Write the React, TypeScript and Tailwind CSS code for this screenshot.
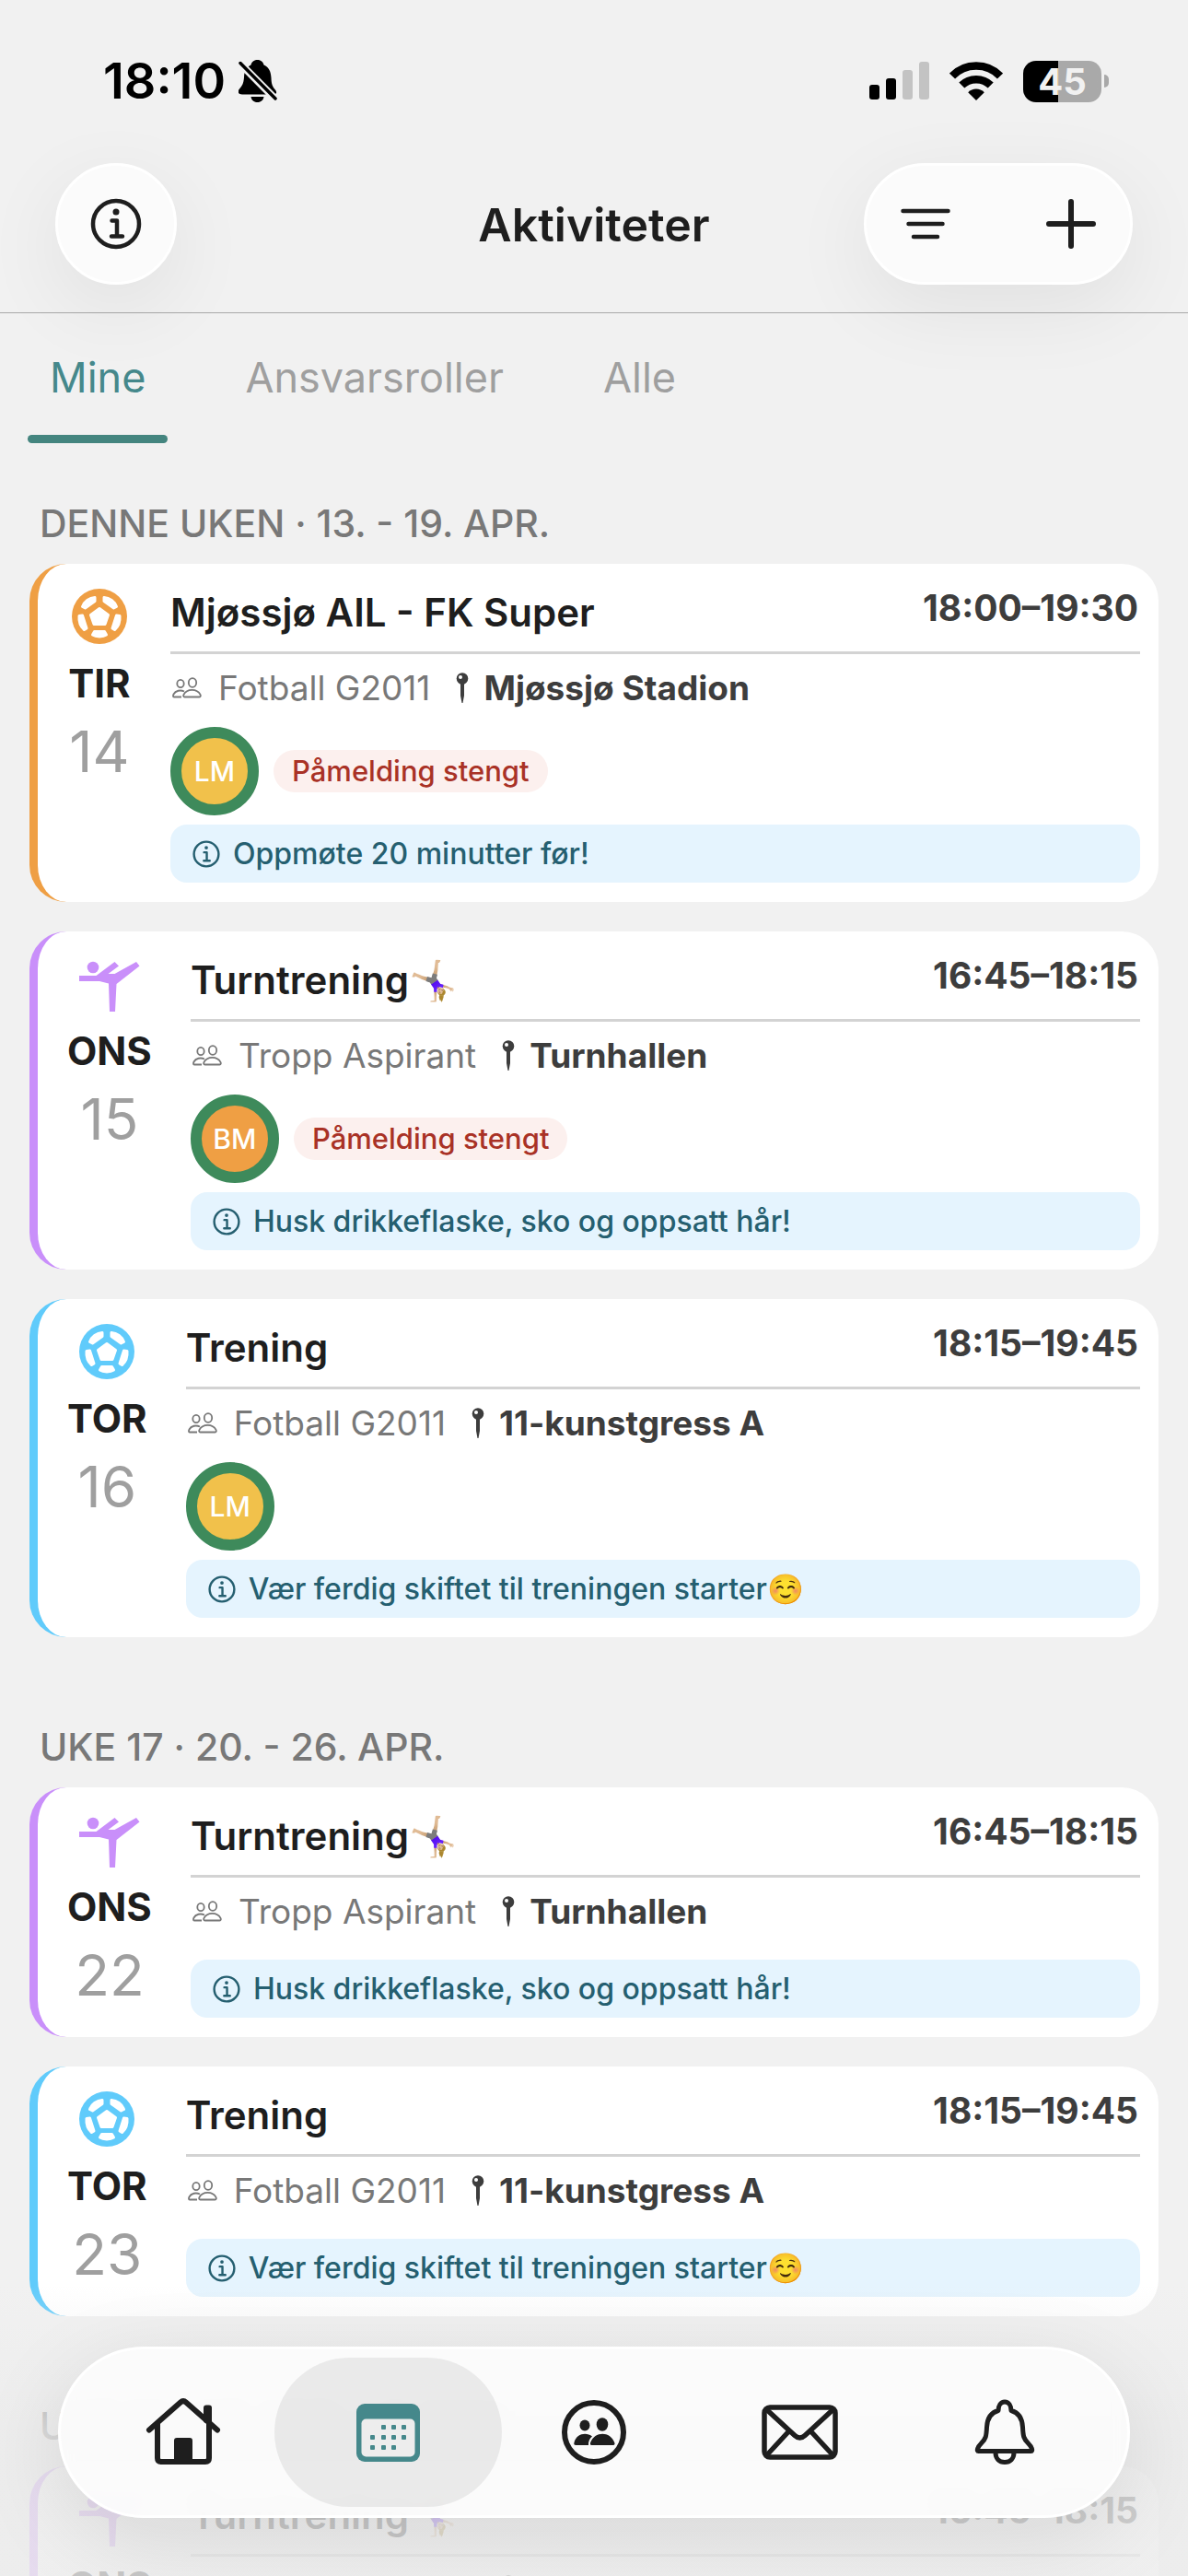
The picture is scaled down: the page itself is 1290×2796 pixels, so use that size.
import type { ReactNode } from 'react';

type Sport = 'football' | 'gymnastics';

interface Participant {
  initials: string;
  className: string;
}

interface Activity {
  id: number;
  sport: Sport;
  accent: string;
  iconColor: string;
  day: string;
  date: string;
  title: string;
  time: string;
  team: string;
  place: string;
  participant?: Participant;
  closed?: boolean;
  info: string;
}

interface Week {
  label: string;
  activities: Activity[];
}

const ORANGE = { accent: 'border-[#ef9f44]', iconColor: 'text-[#ef9f44]' };
const PURPLE = { accent: 'border-[#c98ffa]', iconColor: 'text-[#c98ffa]' };
const BLUE = { accent: 'border-[#60cbfb]', iconColor: 'text-[#60cbfb]' };

const lm: Participant = { initials: 'LM', className: 'bg-[#f1c14b]' };
const bm: Participant = { initials: 'BM', className: 'bg-[#ef9f44]' };

const gym = {
  ...PURPLE,
  sport: 'gymnastics' as Sport,
  day: 'ONS',
  title: 'Turntrening🤸🏼‍♀️',
  time: '16:45–18:15',
  team: 'Tropp Aspirant',
  place: 'Turnhallen',
  info: 'Husk drikkeflaske, sko og oppsatt hår!',
};

const football = {
  ...BLUE,
  sport: 'football' as Sport,
  day: 'TOR',
  title: 'Trening',
  time: '18:15–19:45',
  team: 'Fotball G2011',
  place: '11-kunstgress A',
  info: 'Vær ferdig skiftet til treningen starter☺️',
};

const weeks: Week[] = [
  {
    label: 'DENNE UKEN · 13. - 19. APR.',
    activities: [
      {
        ...ORANGE,
        id: 1,
        sport: 'football',
        day: 'TIR',
        date: '14',
        title: 'Mjøssjø AIL - FK Super',
        time: '18:00–19:30',
        team: 'Fotball G2011',
        place: 'Mjøssjø Stadion',
        participant: lm,
        closed: true,
        info: 'Oppmøte 20 minutter før!',
      },
      { ...gym, id: 2, date: '15', participant: bm, closed: true },
      { ...football, id: 3, date: '16', participant: lm },
    ],
  },
  {
    label: 'UKE 17 · 20. - 26. APR.',
    activities: [
      { ...gym, id: 4, date: '22' },
      { ...football, id: 5, date: '23' },
    ],
  },
  {
    label: 'UKE 18 · 27. APR. - 3. MAI.',
    activities: [{ ...gym, id: 6, date: '29' }],
  },
];

/* Icons */

function InfoIcon({ className, stroke }: { className: string; stroke: number }) {
  return (
    <svg viewBox="0 0 56 56" className={className} fill="none" stroke="currentColor" strokeWidth={stroke} strokeLinecap="round" strokeLinejoin="round">
      <circle cx="28" cy="28" r="25" />
      <path d="M23.500 24.500H29V41.500M23 41.500h12" />
      <circle cx="28" cy="15" r="3.500" fill="currentColor" stroke="none" />
    </svg>
  );
}

function BellOffIcon() {
  return (
    <svg viewBox="0 0 42 46" className="h-[46px] w-[42px]">
      <path
        d="M20.500 0c4 0 6.500 2.500 7 5.500 5.500 2.500 7.800 7.500 8 14 .2 7 1.500 9.500 4 12.500 3 3.500 1.500 5.500-1.500 5.500H4c-4.500 0-5.500-3-3-6 3-3.500 4.500-6 5-12.500.2-7 2.500-11 7.500-13.500.5-3 3-5.500 7-5.500zM13.500 40h14c-.5 3.500-3 6-7 6s-6.500-2.500-7-6z"
        fill="#000"
      />
      <path d="M2.500 4.500 40 42.500" stroke="#f1f1f1" strokeWidth="8" />
      <path d="M2 3.500 40 42" stroke="#000" strokeWidth="3.500" strokeLinecap="round" />
    </svg>
  );
}

function SignalIcon() {
  return (
    <svg viewBox="0 0 65 42" className="h-[42px] w-[65px]">
      <rect x="0" y="25" width="11" height="16" rx="3" />
      <rect x="18" y="18" width="11" height="23" rx="3" />
      <rect x="36" y="9" width="11" height="32" rx="3" fill="#c3c3c3" />
      <rect x="54" y="0" width="11" height="41" rx="3" fill="#c3c3c3" />
    </svg>
  );
}

function WifiIcon() {
  return (
    <svg viewBox="0 0 58 42" className="h-[42px] w-[58px]" fill="none" stroke="#000" strokeWidth="8.500">
      <path d="M3 15.500C17 .8 41 .8 55 15.500" />
      <path d="M13.300 25.500c8.500-8.500 22.900-8.500 31.400 0" />
      <path d="M29 42 20.200 33.200c4.800-5 12.800-5 17.600 0z" fill="#000" stroke="none" />
    </svg>
  );
}

function BallIcon({ className }: { className: string }) {
  return (
    <svg viewBox="0 0 60 60" className={className}>
      <circle cx="30" cy="30" r="30" fill="currentColor" />
      <g fill="#fff" stroke="#fff" strokeWidth="3" strokeLinejoin="round">
        <path d="M30 21.500 39.500 28.500 36 38.500H24L20.500 28.500z" />
        <path d="M25 9.500V13.500L14.500 21 11.500 19.500C13.500 14 19 9.800 25 9.500z" />
        <path d="M35 9.500V13.500L45.500 21 48.500 19.500C46.500 14 41 9.800 35 9.500z" />
        <path d="M8 29.500 11.500 29 16 43 13.500 44.500C9.500 41 7.500 35.500 8 29.500z" />
        <path d="M52 29.500 48.500 29 44 43 46.500 44.500C50.500 41 52.500 35.500 52 29.500z" />
        <path d="M24.500 46.500h11l2 3.500C34 52.500 26 52.500 22.500 50z" />
      </g>
    </svg>
  );
}

function GymnastIcon({ className }: { className: string }) {
  return (
    <svg viewBox="0 0 66 60" className={className} fill="currentColor">
      <circle cx="15" cy="12" r="6.300" />
      <path d="M0 21H18.500L38.500 6l4.500 4.500L31.500 19h7L62 6l3.500 4.500L40.500 30 39 60h-6L32 29.500 22 27H0z" />
    </svg>
  );
}

function PeopleIcon() {
  return (
    <svg viewBox="0 0 32 24" className="h-6 w-8 shrink-0" fill="none" stroke="#787878" strokeWidth="1.800" strokeLinejoin="round">
      <ellipse cx="9" cy="7" rx="3.700" ry="4.200" />
      <ellipse cx="22" cy="6" rx="4.200" ry="4.900" />
      <path d="M10 21.500H2c-1.500 0-1-2-.5-3 2-4 7.500-5 11.500-3" />
      <path d="M13.500 21.500c-1.500 0-1.600-1.500-1-2.700 3.500-6.700 14.500-6.700 18 0 .6 1.200.5 2.700-1 2.700z" />
    </svg>
  );
}

function PinIcon() {
  return (
    <svg viewBox="0 0 14 34" className="h-[34px] w-[14px] shrink-0">
      <path d="M5 11h4v14L7.500 33h-1L5 25z" fill="#3d3d3d" />
      <circle cx="7" cy="6.500" r="6.300" fill="#3d3d3d" />
      <circle cx="5" cy="5" r="2" fill="#fff" />
    </svg>
  );
}

function HomeIcon() {
  return (
    <svg viewBox="0 0 82 74" className="h-[74px] w-[82px]" fill="none" stroke="#1e1e1e" strokeWidth="6" strokeLinecap="round" strokeLinejoin="round">
      <path d="M4 34.500 38 4.500q3-2.600 6 0L78 34.500" />
      <path d="M13 28V65q0 4 4 4H65q4 0 4-4V10.500h-3V24" />
      <path d="M32 68V46q0-2 2-2H48q2 0 2 2V68z" fill="#1e1e1e" strokeWidth="2" />
    </svg>
  );
}

const calendarDots = [
  [27, 24], [38, 24], [49, 24],
  [15, 35], [27, 35], [38, 35], [49, 35],
  [15, 46], [27, 46], [38, 46],
];

function CalendarIcon() {
  return (
    <svg viewBox="0 0 69 63" className="h-[63px] w-[69px]">
      <rect width="69" height="63" rx="9" fill="#45888b" />
      <rect x="5.500" y="16.500" width="58" height="41" rx="5" fill="#ededed" />
      {calendarDots.map(([x, y]) => (
        <rect key={`${x}-${y}`} x={x} y={y - 1} width="5" height="5" rx="1" fill="#45888b" />
      ))}
    </svg>
  );
}

function GroupIcon() {
  return (
    <svg viewBox="0 0 70 70" className="h-[70px] w-[70px]">
      <circle cx="35" cy="35" r="32" fill="none" stroke="#1e1e1e" strokeWidth="6" />
      <g fill="#1e1e1e">
        <ellipse cx="25" cy="27.500" rx="5.500" ry="6" />
        <ellipse cx="44" cy="26.500" rx="6.300" ry="7.300" />
        <path d="M15.500 49c-2.300 0-2.500-1.200-2-3C16 36 27 34.500 33 39.500c-2.500 2.200-4.500 5.500-4 9.500z" />
        <path d="M32.500 49c-1.800 0-1.900-1.400-1.300-3 4.500-12.500 21.500-12.500 26 0 .6 1.600.5 3-1.300 3z" />
      </g>
    </svg>
  );
}

function MailIcon() {
  return (
    <svg viewBox="0 0 83 60" className="h-[60px] w-[83px]" fill="none" stroke="#1e1e1e" strokeWidth="5.500" strokeLinejoin="round">
      <rect x="3" y="3" width="77" height="54" rx="6" />
      <path d="M4.500 4.500 36 33.500q5.500 5 11 0L78.500 4.500M5 55.500 29.500 29M78 55.500 53.500 29" />
    </svg>
  );
}

function BellIcon() {
  return (
    <svg viewBox="0 0 66 72" className="h-[72px] w-[66px]" fill="none" stroke="#1e1e1e" strokeWidth="5" strokeLinejoin="round">
      <path d="M26 12.500c0-5 2.500-9.500 7-9.500s7 4.500 7 9.500c8 2 12 9 12.500 18 .5 10 1 12.500 6 17.500 4 4 5.500 8.500 3 8.500h-57c-2.500 0-1-4.500 3-8.500 5-5 5.500-7.500 6-17.500.5-9 4.500-16 12.500-18z" />
      <path d="M23 58c0 6.500 4 10.500 10 10.500S43 64.500 43 58" />
    </svg>
  );
}

/* Page parts */

function StatusBar() {
  return (
    <div className="flex items-center justify-between pt-[56px] pr-[86px] pl-[112px]">
      <div className="flex h-[64px] items-center gap-[14px]">
        <span className="text-[54px] leading-[64px] font-semibold text-black">18:10</span>
        <BellOffIcon />
      </div>
      <div className="flex items-center gap-[22px]">
        <SignalIcon />
        <WifiIcon />
        <div className="flex items-center gap-[3px]">
          <div className="flex h-[45px] w-[85px] items-center justify-center rounded-[14px] bg-linear-to-r from-black from-45% to-[#a9a9a9] to-45% text-[40px] leading-[45px] font-bold text-[#f1f1f1]">
            45
          </div>
          <div className="h-[14px] w-[5px] rounded-r-full bg-[#a9a9a9]" />
        </div>
      </div>
    </div>
  );
}

const glass = 'rounded-full border-[3px] border-white bg-[#fbfbfb] shadow-[0_24px_90px_rgba(0,0,0,0.07)]';

function Header() {
  return (
    <header className="grid grid-cols-[1fr_auto_1fr] items-center border-b border-[#a9a9a9] px-[60px] pt-[57px] pb-[30px] text-[#1e1e1e]">
      <button type="button" aria-label="Informasjon" className={`flex h-[132px] w-[132px] items-center justify-center ${glass}`}>
        <InfoIcon className="h-[56px] w-[56px]" stroke={4.5} />
      </button>
      <h1 className="pt-[2px] text-[50px] leading-[60px] font-semibold">Aktiviteter</h1>
      <div className={`flex h-[132px] w-[292px] items-center justify-between justify-self-end px-[37px] ${glass}`}>
        <button type="button" aria-label="Filter">
          <svg viewBox="0 0 54 34" className="h-[34px] w-[54px]" stroke="currentColor" strokeWidth="4.500" strokeLinecap="round">
            <path d="M2.500 3h49M8.500 17h37M14 31h26" />
          </svg>
        </button>
        <button type="button" aria-label="Ny aktivitet">
          <svg viewBox="0 0 54 54" className="h-[54px] w-[54px]" stroke="currentColor" strokeWidth="6" strokeLinecap="round">
            <path d="M27 3v48M3 27h48" />
          </svg>
        </button>
      </div>
    </header>
  );
}

function Tabs() {
  return (
    <nav className="flex items-start gap-[60px] px-[30px] pt-10 text-[45px] leading-[60px] text-[#9f9f9f]">
      <button type="button" className="text-[#45888b]">
        <span className="block px-6 pb-8">Mine</span>
        <span className="block h-[9px] rounded-full bg-[#44857f]" />
      </button>
      <button type="button" className="px-6">Ansvarsroller</button>
      <button type="button" className="px-6">Alle</button>
    </nav>
  );
}

function ActivityCard({ activity }: { activity: Activity }) {
  const Icon = activity.sport === 'football' ? BallIcon : GymnastIcon;

  return (
    <li className={`flex gap-[42px] rounded-[40px] border-l-[9px] bg-white pr-5 pb-[21px] pl-8 ${activity.accent}`}>
      <div className="flex min-w-[70px] flex-col items-center pt-[27px]">
        <Icon className={`h-[60px] w-[66px] ${activity.iconColor}`} />
        <p className="mt-[18px] text-[42px] leading-[50px] font-bold text-[#1e1e1e]">{activity.day}</p>
        <p className="mt-[14px] text-[62px] leading-[70px] text-[#9f9f9f]">{activity.date}</p>
      </div>

      <div className="min-w-0 flex-1">
        <div className="flex h-[98px] items-start justify-between border-b-[3px] border-[#d3d3d3]">
          <h3 className="pt-[28px] text-[42px] leading-[50px] font-semibold text-[#1e1e1e]">{activity.title}</h3>
          <p className="pt-[23px] pr-[2px] text-[39px] leading-[50px] font-bold text-[#3d3d3d]">{activity.time}</p>
        </div>

        <div className="flex h-[79px] items-start text-[37px] leading-[50px]">
          <div className="flex items-center gap-[18px] pt-[12px] pl-[2px] text-[#787878]">
            <PeopleIcon />
            <span>{activity.team}</span>
          </div>
          <div className="flex items-center gap-[16px] pt-[12px] pl-[28px] font-bold text-[#3d3d3d]">
            <PinIcon />
            <span>{activity.place}</span>
          </div>
        </div>

        {activity.participant && (
          <div className="flex items-center gap-4">
            <div className={`flex h-24 w-24 items-center justify-center rounded-full border-[12px] border-[#3e8a5b] text-[30px] font-medium text-white ${activity.participant.className}`}>
              {activity.participant.initials}
            </div>
            {activity.closed && (
              <span className="rounded-full bg-[#fcf0ee] px-5 text-[31px] leading-[46px] font-medium text-[#a93226]">
                Påmelding stengt
              </span>
            )}
          </div>
        )}

        <div className="mt-[10px] flex h-[63px] items-center gap-[14px] rounded-[18px] bg-[#e5f4fe] px-6 text-[32px] font-medium text-[#255f70]">
          <InfoIcon className="h-[30px] w-[30px] shrink-0" stroke={4.5} />
          <span>{activity.info}</span>
        </div>
      </div>
    </li>
  );
}

function NavItem({ label, active, children }: { label: string; active?: boolean; children: ReactNode }) {
  return (
    <a href="#" aria-label={label} aria-current={active ? 'page' : undefined} className="flex-1">
      <div className={`-mx-3 flex h-[162px] items-center justify-center rounded-full ${active ? 'bg-black/7' : ''}`}>
        {children}
      </div>
    </a>
  );
}

export default function App() {
  return (
    <div className="relative h-screen overflow-hidden bg-[#f1f1f1] font-[Inter,sans-serif]">
      <StatusBar />
      <Header />
      <Tabs />

      <main className="px-8 pt-[59px]">
        {weeks.map((week) => (
          <section key={week.label} className="mb-[91px]">
            <h2 className="px-[11px] pb-4 text-[41px] leading-[56px] font-medium text-[#787878]">{week.label}</h2>
            <ul className="flex flex-col gap-8">
              {week.activities.map((activity) => (
                <ActivityCard key={activity.id} activity={activity} />
              ))}
            </ul>
          </section>
        ))}
      </main>

      {/* Bottom navigation floats over the fading list */}
      <div className="pointer-events-none absolute inset-x-0 bottom-0 bg-linear-to-b from-[#ececec]/0 to-[#ececec]/82 to-50% px-[63px] pt-[67px] pb-[63px]">
        <nav className="pointer-events-auto flex items-center rounded-full border-[3px] border-white bg-[#fbfbfb]/95 px-[21px] py-[9px] shadow-[0_24px_96px_rgba(0,0,0,0.1)] backdrop-blur-sm">
          <NavItem label="Hjem"><HomeIcon /></NavItem>
          <NavItem label="Aktiviteter" active><CalendarIcon /></NavItem>
          <NavItem label="Grupper"><GroupIcon /></NavItem>
          <NavItem label="Meldinger"><MailIcon /></NavItem>
          <NavItem label="Varsler"><BellIcon /></NavItem>
        </nav>
      </div>
    </div>
  );
}
